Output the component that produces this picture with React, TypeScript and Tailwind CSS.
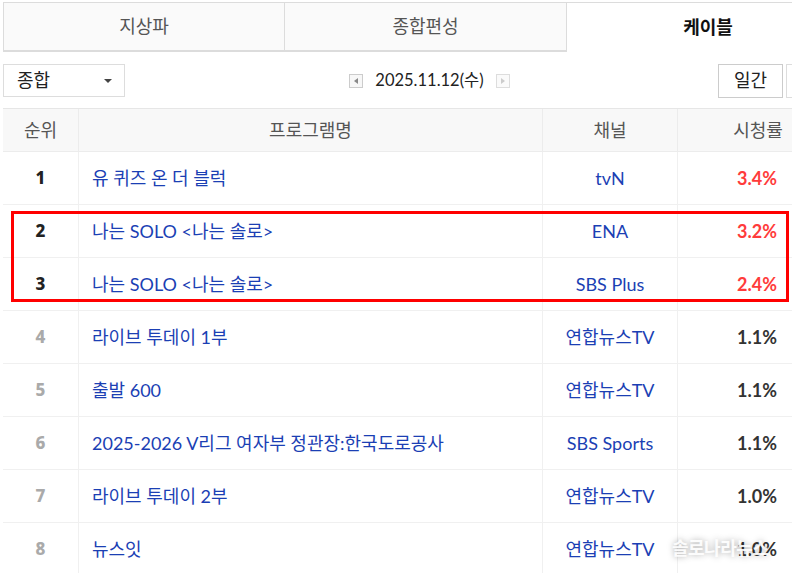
import React from "react";

const rows = [
  { rank: 1, name: "유 퀴즈 온 더 블럭", ch: "tvN", rate: "3.4%", top: true },
  { rank: 2, name: "나는 SOLO <나는 솔로>", ch: "ENA", rate: "3.2%", top: true },
  { rank: 3, name: "나는 SOLO <나는 솔로>", ch: "SBS Plus", rate: "2.4%", top: true },
  { rank: 4, name: "라이브 투데이 1부", ch: "연합뉴스TV", rate: "1.1%", top: false },
  { rank: 5, name: "출발 600", ch: "연합뉴스TV", rate: "1.1%", top: false },
  { rank: 6, name: "2025-2026 V리그 여자부 정관장:한국도로공사", ch: "SBS Sports", rate: "1.1%", top: false },
  { rank: 7, name: "라이브 투데이 2부", ch: "연합뉴스TV", rate: "1.0%", top: false },
  { rank: 8, name: "뉴스잇", ch: "연합뉴스TV", rate: "1.0%", top: false },
];

export default function App() {
  return (
    <div
      className="relative w-[792px] h-[573px] overflow-hidden bg-white"
      style={{ fontFamily: 'Lato, "Noto Sans CJK KR", "Noto Sans", sans-serif' }}
    >
      <div className="w-[846px] ml-[3px] pt-[2px]">
        {/* Tabs */}
        <div className="flex h-[50px] border-t border-[#dcdcdc]">
          <div className="w-[282px] flex items-center justify-center bg-[#fafafa] border-l border-r border-b-2 border-[#dcdcdc] text-[18px] text-[#555]">
            지상파
          </div>
          <div className="w-[282px] flex items-center justify-center bg-[#fafafa] border-r border-b-2 border-[#dcdcdc] text-[18px] text-[#555]">
            종합편성
          </div>
          <div className="flex-1 flex items-center justify-center bg-white text-[18px] font-bold text-[#111]">
            케이블
          </div>
        </div>

        {/* Controls */}
        <div className="flex items-center h-[56px] pt-[1px]">
          <div className="w-[122px] h-[33px] border border-[#ddd] flex items-center justify-between pl-[13px] pr-[12px] text-[18px] text-[#222]">
            <span>종합</span>
            <span className="w-0 h-0 border-l-[4px] border-r-[4px] border-t-[4px] border-l-transparent border-r-transparent border-t-[#444]" />
          </div>
          <div className="flex-1 flex items-center justify-center gap-[12px] pl-[16px]">
            <span className="w-[14px] h-[14px] border border-[#ccc] bg-[#f7f7f7] flex items-center justify-center">
              <span className="w-0 h-0 border-t-[3px] border-b-[3px] border-r-[4px] border-t-transparent border-b-transparent border-r-[#888]" />
            </span>
            <span className="text-[16.5px] text-[#222]">2025.11.12(수)</span>
            <span className="w-[14px] h-[14px] border border-[#ddd] bg-[#fafafa] flex items-center justify-center">
              <span className="w-0 h-0 border-t-[3px] border-b-[3px] border-l-[4px] border-t-transparent border-b-transparent border-l-[#ccc]" />
            </span>
          </div>
          <div className="flex gap-[3px] w-[133px] mr-[-2px]">
            <div className="w-[65px] h-[34px] border border-[#ccc] flex items-center justify-center text-[18px] text-[#222] shrink-0">
              일간
            </div>
            <div className="w-[65px] h-[34px] border border-[#ddd] flex items-center justify-center text-[18px] text-[#555] shrink-0">
              주간
            </div>
          </div>
        </div>

        {/* Table */}
        <div className="border-t border-[#e6e6e6]">
          <div className="flex h-[43px] bg-[#f8f8f8] border-b border-[#ececec] text-[18px] text-[#555]">
            <div className="w-[76px] flex items-center justify-center border-r border-[#ececec]">순위</div>
            <div className="w-[464px] flex items-center justify-center border-r border-[#ececec]">프로그램명</div>
            <div className="w-[135px] flex items-center justify-center border-r border-[#ececec]">채널</div>
            <div className="w-[160px] flex items-center justify-center">시청률</div>
          </div>
          {rows.map((r) => (
            <div key={r.rank} className="flex h-[53px] border-b border-[#f0f0f0]">
              <div
                className={`w-[76px] flex items-center justify-center border-r border-[#f0f0f0] text-[17px] font-extrabold ${
                  r.top ? "text-[#222]" : "text-[#aaa]"
                }`}
                style={{ fontFamily: '"Noto Sans", sans-serif' }}
              >
                {r.rank}
              </div>
              <div className="w-[464px] flex items-center pl-[13px] border-r border-[#f0f0f0] text-[18px] text-[#1b3fb4] whitespace-nowrap">
                {r.name}
              </div>
              <div className="w-[135px] flex items-center justify-center border-r border-[#f0f0f0] text-[18px] text-[#1b3fb4] whitespace-nowrap">
                {r.ch}
              </div>
              <div
                className={`w-[160px] flex items-center justify-center text-[18px] font-bold pr-[2px] ${
                  r.top ? "text-[#ff3b3b]" : "text-[#333]"
                }`}
              >
                {r.rate}
              </div>
            </div>
          ))}
        </div>
      </div>

      {/* Red highlight box */}
      <div className="absolute left-[11px] top-[211px] w-[778px] h-[91px] border-[3px] border-[#ff0000]" />

      {/* Watermark */}
      <div
        className="absolute left-[672px] top-[535px] text-[18px] font-bold text-white/90 tracking-[-0.5px]"
        style={{ textShadow: "0 0 6px rgba(0,0,0,0.35)" }}
      >
        솔로나라뉴스
      </div>
    </div>
  );
}
